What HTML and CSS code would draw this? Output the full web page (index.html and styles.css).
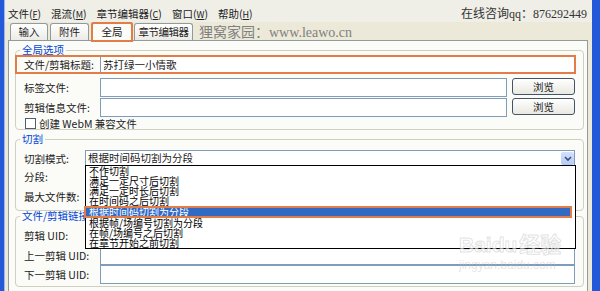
FILE: index.html
```html
<!DOCTYPE html>
<html lang="zh-CN">

<head>
    <meta charset="UTF-8">
    <meta name="viewport" content="width=device-width, initial-scale=1.0">
    <link rel="stylesheet" href="styles.css">
    <title>全局选项</title>
</head>

<body>
    <div class="window">
        <!-- menu bar -->
        <div class="menubar">
            <span class="menu">文件(<u>F</u>)</span>
            <span class="menu">混流(<u>M</u>)</span>
            <span class="menu">章节编辑器(<u>C</u>)</span>
            <span class="menu">窗口(<u>W</u>)</span>
            <span class="menu">帮助(<u>H</u>)</span>
            <span class="contact">在线咨询qq：876292449</span>
        </div>

        <!-- tabs -->
        <div class="tabbar">
            <span class="tab">输入</span>
            <span class="tab second">附件</span>
            <span class="tab active">全局</span>
            <span class="tab wide">章节编辑器</span>
            <span class="site">狸窝家园：www.leawo.cn</span>
        </div>

        <div class="panel">
            <fieldset class="group first">
                <legend>全局选项</legend>
                <div class="row mark">
                    <label>文件/剪辑标题:</label>
                    <div class="field">苏打绿一小情歌</div>
                </div>
                <div class="row gap">
                    <label>标签文件:</label>
                    <div class="field"></div>
                    <button>浏览</button>
                </div>
                <div class="row">
                    <label>剪辑信息文件:</label>
                    <div class="field"></div>
                    <button>浏览</button>
                </div>
                <div class="check"><span class="box"></span>创建 WebM 兼容文件</div>
            </fieldset>

            <fieldset class="group split">
                <legend>切割</legend>
                <div class="row select-row">
                    <label>切割模式:</label>
                    <div class="select">
                        根据时间码切割为分段
                        <span class="arrow">
                            <svg width="8" height="6" viewBox="0 0 8 6">
                                <path d="M1 1 L4 4 L7 1" fill="none" stroke="#3b4f7a" stroke-width="1.6" />
                            </svg>
                        </span>
                        <ul class="dropdown">
                            <li>不作切割</li>
                            <li>满足一定尺寸后切割</li>
                            <li>满足一定时长后切割</li>
                            <li>在时间码之后切割</li>
                            <li class="selected">根据时间码切割为分段</li>
                            <li>根据帧/场编号切割为分段</li>
                            <li>在帧/场编号之后切割</li>
                            <li>在章节开始之前切割</li>
                        </ul>
                    </div>
                </div>
                <div class="row">
                    <label>分段:</label>
                    <div class="field"></div>
                </div>
                <div class="row">
                    <label>最大文件数:</label>
                    <div class="field"></div>
                </div>
            </fieldset>

            <fieldset class="group links">
                <legend>文件/剪辑链接</legend>
                <div class="row">
                    <label>剪辑 UID:</label>
                    <div class="field"></div>
                </div>
                <div class="row">
                    <label>上一剪辑 UID:</label>
                    <div class="field"></div>
                </div>
                <div class="row last">
                    <label>下一剪辑 UID:</label>
                    <div class="field"></div>
                </div>
            </fieldset>
        </div>

        <div class="watermark">
            <span class="wm-logo">Bai<span class="wm-du">du</span>经验</span>
            <span class="wm-url">jingyan.baidu.com</span>
        </div>
    </div>
</body>

</html>
```

FILE: styles.css
```css
* {
    box-sizing: border-box;
}

body {
    margin: 0;
    width: 600px;
    height: 291px;
    overflow: hidden;
    background: #2359d8;
    font-family: "Noto Sans CJK SC", sans-serif;
    font-size: 10.5px;
    color: #222;
}

.window {
    position: relative;
    height: 291px;
    margin: 0 8px 0 4px;
    background: #ece9d8;
    border-left: 1px solid #9db5ee;
    display: flex;
    flex-direction: column;
}

/* menu bar */
.menubar {
    height: 22px;
    padding: 4px 5px 0 3px;
    display: flex;
    align-items: center;
    gap: 10px;
    background: #efeee7;
}

.menu u {
    font-size: 9px;
}

.contact {
    margin-left: auto;
    font-family: "Liberation Serif", "Noto Sans CJK SC", serif;
    font-size: 12px;
    color: #333;
}

/* tabs */
.tabbar {
    height: 18px;
    padding-left: 5px;
    display: flex;
    align-items: flex-end;
    gap: 2px;
    position: relative;
    z-index: 2;
}

.tab {
    width: 38px;
    height: 17px;
    line-height: 16px;
    text-align: center;
    border: 1px solid #919b9c;
    border-bottom: none;
    border-radius: 3px 3px 0 0;
    background: linear-gradient(#ffffff, #ecebe6);
}

.tab.second {
    width: 39px;
}

.tab.active {
    width: 42px;
    height: 20px;
    line-height: 18px;
    margin-bottom: -2px;
    background: #fbfbf8;
    outline: 2px solid #e27d47;
    outline-offset: -2px;
}

.tab.wide {
    width: 59px;
    margin-left: -1px;
    letter-spacing: -0.5px;
}

.site {
    align-self: center;
    margin-left: 4px;
    font-family: "Liberation Serif", "Noto Sans CJK SC", serif;
    font-size: 14px;
    color: #808080;
}

/* tab page */
.panel {
    flex: 1;
    margin: 0 4px 0 3px;
    padding: 0 3px 0 6px;
    border: 1px solid #919b9c;
    border-bottom: none;
    background: #fbfbf8;
}

.group {
    margin: 0;
    padding: 0 8px;
    border: 1px solid #d0d0bf;
    border-radius: 4px;
    min-width: 0;
}

.group legend {
    margin-left: -4px;
    padding: 0 2px;
    line-height: 10px;
    color: #0046d5;
}

.group.first {
    margin-top: 4px;
}

.group.split {
    margin-top: 4px;
    padding-bottom: 4px;
}

.group.links {
    padding-bottom: 2px;
}

.row {
    display: flex;
    align-items: center;
    height: 19px;
    margin-top: 1px;
}

.row label {
    width: 76px;
    flex: none;
}

.field {
    flex: 1;
    height: 19px;
    line-height: 17px;
    padding-left: 2px;
    border: 1px solid #7f9db9;
    background: #fff;
}

.row.mark {
    margin: 0 -1px 0 -9px;
    padding-left: 9px;
    outline: 2px solid #e27d47;
    outline-offset: -2px;
}

.row.gap {
    margin-top: 4px;
}

.row button {
    align-self: flex-start;
    width: 63px;
    height: 17px;
    margin-left: 5px;
    padding: 0;
    border: 1px solid #41546a;
    border-radius: 3px;
    background: linear-gradient(#ffffff, #e9e8e1);
    font-family: inherit;
    font-size: 10.5px;
    color: #222;
}

.check {
    height: 12px;
    display: flex;
    align-items: center;
}

.check .box {
    width: 11px;
    height: 11px;
    margin: 0 3px 0 1px;
    border: 1px solid #4d5f74;
    background: #fff;
}

/* combobox and its open list */
.select-row {
    height: 16px;
    margin-top: 6px;
}

.select-row label {
    width: 61px;
}

.select {
    position: relative;
    flex: 1;
    height: 16px;
    line-height: 14px;
    padding-left: 2px;
    border: 1px solid #7f9db9;
    background: #fff;
}

.arrow {
    position: absolute;
    right: 0;
    top: 1px;
    width: 13px;
    height: 13px;
    border-radius: 2px;
    background: linear-gradient(#d3e0fd, #b6caf5);
    display: flex;
    align-items: center;
    justify-content: center;
}

.dropdown {
    position: absolute;
    left: -1px;
    top: 14px;
    width: calc(100% + 3px);
    margin: 0;
    padding: 0;
    list-style: none;
    border: 1px solid #000;
    background: #fff;
    z-index: 3;
}

.dropdown li {
    height: 10px;
    line-height: 10px;
    padding-left: 3px;
    font-size: 10px;
    color: #000;
    white-space: nowrap;
}

.dropdown li.selected {
    height: 12px;
    line-height: 12px;
    margin: 0 3px 0 -2px;
    padding-left: 5px;
    background: #316ac5;
    color: #fff;
    outline: 2px solid #e27d47;
    outline-offset: -2px;
}

.links .row:first-of-type {
    margin-top: 5px;
}

.row.last {
    margin-top: 0;
}

/* baidu watermark */
.watermark {
    position: absolute;
    left: 454px;
    top: 232px;
    display: flex;
    flex-direction: column;
    z-index: 5;
    pointer-events: none;
}

.wm-logo {
    font-family: "Liberation Sans", "Noto Sans CJK SC", sans-serif;
    font-size: 21px;
    font-weight: bold;
    line-height: 26px;
    color: rgba(255, 255, 255, 0.6);
    -webkit-text-stroke: 1px rgba(170, 170, 170, 0.35);
}

.wm-du {
    margin-right: 2px;
}

.wm-url {
    font-family: "Liberation Sans", sans-serif;
    font-size: 12px;
    line-height: 14px;
    color: rgba(190, 190, 190, 0.4);
}
```
